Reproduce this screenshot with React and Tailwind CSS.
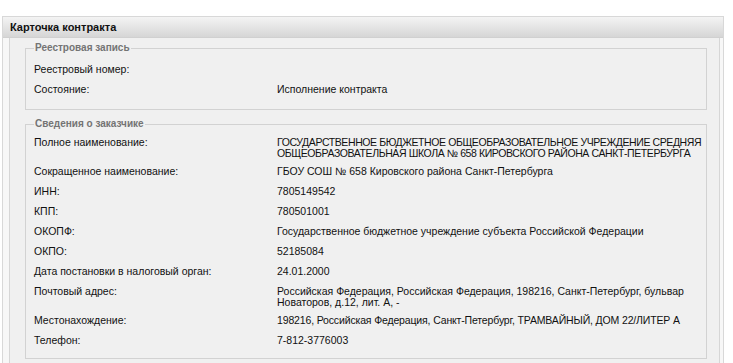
import React from "react";

const registry = [
  { label: "Реестровый номер:", lines: [] },
  { label: "Состояние:", lines: [{ t: "Исполнение контракта" }] },
];

const customer = [
  {
    label: "Полное наименование:",
    lines: [
      { t: "ГОСУДАРСТВЕННОЕ БЮДЖЕТНОЕ ОБЩЕОБРАЗОВАТЕЛЬНОЕ УЧРЕЖДЕНИЕ СРЕДНЯЯ", caps: true },
      { t: "ОБЩЕОБРАЗОВАТЕЛЬНАЯ ШКОЛА № 658 КИРОВСКОГО РАЙОНА САНКТ-ПЕТЕРБУРГА", caps: true },
    ],
  },
  { label: "Сокращенное наименование:", lines: [{ t: "ГБОУ СОШ № 658 Кировского района Санкт-Петербурга" }] },
  { label: "ИНН:", lines: [{ t: "7805149542" }] },
  { label: "КПП:", lines: [{ t: "780501001" }] },
  { label: "ОКОПФ:", lines: [{ t: "Государственное бюджетное учреждение субъекта Российской Федерации" }] },
  { label: "ОКПО:", lines: [{ t: "52185084" }] },
  { label: "Дата постановки в налоговый орган:", lines: [{ t: "24.01.2000" }] },
  {
    label: "Почтовый адрес:",
    lines: [
      { t: "Российская Федерация, Российская Федерация, 198216, Санкт-Петербург, бульвар" },
      { t: "Новаторов, д.12, лит. А, -" },
    ],
  },
  {
    label: "Местонахождение:",
    lines: [{ t: "198216, Российская Федерация, Санкт-Петербург, ТРАМВАЙНЫЙ, ДОМ 22/ЛИТЕР А", mixed: true }],
  },
  { label: "Телефон:", lines: [{ t: "7-812-3776003" }] },
];

function Row({ label, lines }) {
  const tall = lines.length > 1;
  return (
    <div className={`flex items-start pt-[4px] leading-[11px] ${tall ? "h-[29px]" : "h-[20px]"}`}>
      <div className="w-[243px] shrink-0 text-[10.5px] text-[#111]">{label}</div>
      <div className="min-w-0 flex-1 text-[10.5px] text-[#111]">
        {lines.map((l, i) => (
          <div
            key={i}
            className={`whitespace-nowrap ${l.caps ? "tracking-[-0.4px]" : ""} ${l.mixed ? "tracking-[-0.15px]" : ""}`}
          >
            {l.t}
          </div>
        ))}
      </div>
    </div>
  );
}

function Group({ title, children, className = "" }) {
  return (
    <fieldset className={`min-w-0 border border-[#d2d2d2] px-[8px] ${className}`}>
      <legend className="px-[1px] text-[10px] font-bold leading-[12px] text-[#747474]">{title}</legend>
      {children}
    </fieldset>
  );
}

export default function App() {
  return (
    <div
      className="h-[363px] w-[733px] overflow-hidden bg-white pt-[16px] pl-[2px]"
      style={{ fontFamily: '"Liberation Sans", Arial, sans-serif' }}
    >
      <div className="w-[722px] border-x border-t border-[#d8d8d8] bg-[#f7f7f7]">
        <div className="flex h-[21px] items-center border-b border-[#d0d0d0] bg-gradient-to-b from-[#f4f4f4] to-[#d6d6d6] pl-[7px] text-[11px] font-bold text-[#111]">
          Карточка контракта
        </div>
        <div className="ml-[6px] mr-[3px] h-[330px] border-x border-[#d6d6d6] bg-[#f0f0f0] pl-[15px] pr-[12px] pt-[4px]">
          <Group title="Реестровая запись" className="pt-[6px] pb-[9px]">
            {registry.map((r) => (
              <Row key={r.label} label={r.label} lines={r.lines} />
            ))}
          </Group>
          <Group title="Сведения о заказчике" className="mt-[8px] pt-[3px] pb-[7px]">
            {customer.map((r) => (
              <Row key={r.label} label={r.label} lines={r.lines} />
            ))}
          </Group>
        </div>
      </div>
    </div>
  );
}
